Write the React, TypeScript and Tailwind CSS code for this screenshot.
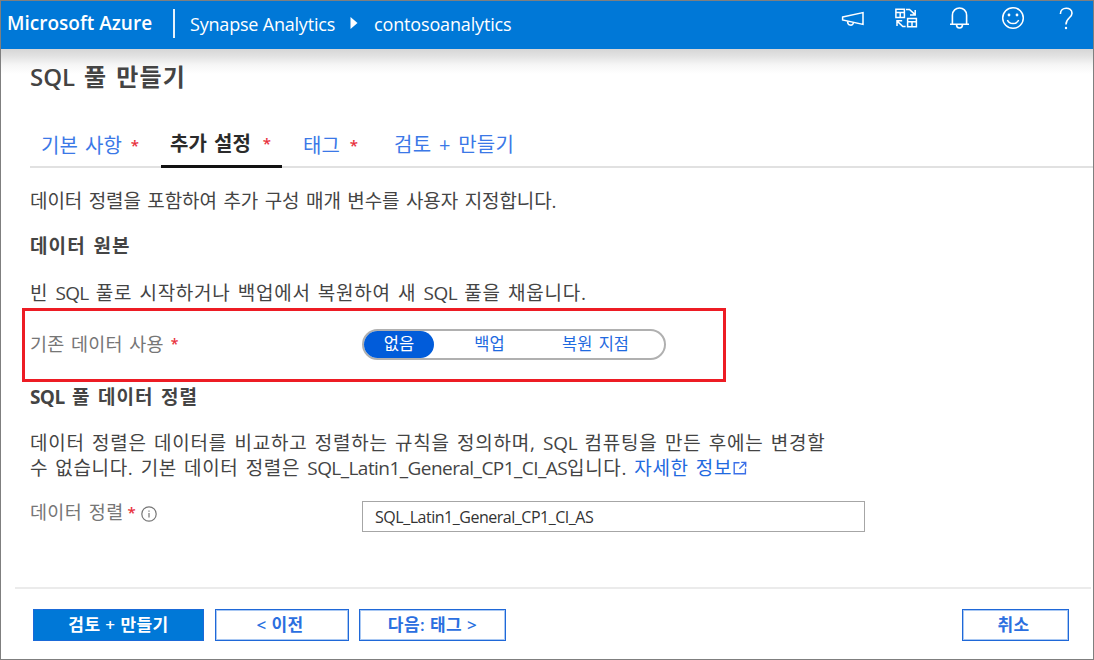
import React from "react";

function MegaphoneIcon() {
  return (
    <svg width="24" height="24" viewBox="0 0 24 24" fill="none" stroke="#fff" strokeWidth="1.5">
      <path d="M2.6 11 L23 6.6 V18.4 L2.6 14 Z" />
      <path d="M7.6 15.2 C7.6 20.2 13.2 20.2 13.4 16.5" />
    </svg>
  );
}

function DirectoryIcon() {
  return (
    <svg width="24" height="24" viewBox="0 0 24 24" fill="none" stroke="#fff" strokeWidth="1.5">
      <path d="M1.9 3.2 H10.4 V11.4 H1.9 Z M1.9 6.4 H10.4 M6.2 6.4 V11.4" />
      <path d="M13.6 12.6 H22.4 V20.8 H13.6 Z M13.6 15.8 H22.4 M18 15.8 V20.8" />
      <path d="M12 3.4 H15.5 L20.8 8.4 M21.2 4 V9 H16" />
      <path d="M11.6 20.6 H8.8 L3.4 15.4 M3 20 V14.8 H8.2" />
    </svg>
  );
}

function BellIcon() {
  return (
    <svg width="24" height="24" viewBox="0 0 24 24" fill="none" stroke="#fff" strokeWidth="1.6">
      <path d="M3 18.2 H22 M5.4 18 V9.2 C5.4 -0.4 19.6 -0.4 19.6 9.2 V18" />
      <path d="M9.5 18.6 C9.5 23.2 15.5 23.2 15.5 18.6" />
    </svg>
  );
}

function SmileyIcon() {
  return (
    <svg width="24" height="24" viewBox="0 0 24 24" fill="none" stroke="#fff" strokeWidth="1.5">
      <circle cx="12" cy="12" r="10.3" />
      <path d="M6.4 14 C8.2 18.8 15.8 18.8 17.6 14" />
      <circle cx="8" cy="9" r="1.4" fill="#fff" stroke="none" />
      <circle cx="16" cy="9" r="1.4" fill="#fff" stroke="none" />
    </svg>
  );
}

function HelpIcon() {
  return (
    <svg width="24" height="24" viewBox="0 0 24 24" fill="none" stroke="#fff" strokeWidth="1.6">
      <path d="M6.4 8 C6.4 0.2 18 0.6 18 7.2 C18 11.8 12 12 12 18.4" />
      <circle cx="12" cy="22" r="1.2" fill="#fff" stroke="none" />
    </svg>
  );
}

function InfoIcon() {
  return (
    <svg className="ml-[5px] mt-[3px]" width="16" height="16" viewBox="0 0 16 16" fill="none" stroke="#767676" strokeWidth="1.2">
      <circle cx="8" cy="8" r="7.2" />
      <path d="M8 7 V11.6" />
      <path d="M8 4.4 V5.7" />
    </svg>
  );
}

function ExternalIcon() {
  return (
    <svg className="ml-[1px] inline-block align-[0px]" width="14" height="14" viewBox="0 0 14 14" fill="none" stroke="#3b6fe8" strokeWidth="1.4">
      <path d="M6.5 1.7 H1.2 V12.8 H12.4 V7.5" />
      <path d="M8.2 1.4 H12.7 V5.8 M12.6 1.5 L6.4 7.7" />
    </svg>
  );
}

function Star({ className = "" }: { className?: string }) {
  return <span className={"font-semibold text-[#e8303c] " + className}>*</span>;
}

export default function App() {
  return (
    <div className="flex h-[660px] w-[1094px] flex-col overflow-hidden border border-[#7f7f7f] bg-white font-['Open_Sans','Noto_Sans_CJK_KR',sans-serif] text-[#444]">
      <header className="flex h-12 shrink-0 items-center bg-[#0078d7] text-white">
        <div className="w-[172px] whitespace-nowrap pb-[3px] pl-[6px] text-[19px] font-semibold">Microsoft Azure</div>
        <div className="mb-1 h-[29px] w-[2px] bg-white/90" />
        <div className="w-[161px] whitespace-nowrap pb-[2px] pl-[15px] text-[18px] tracking-[-0.2px]">Synapse Analytics</div>
        <svg className="mb-1 ml-[14px]" width="8" height="12" viewBox="0 0 8 12">
          <path d="M0.5 0 L7.5 6 L0.5 12 Z" fill="#fff" />
        </svg>
        <div className="ml-4 whitespace-nowrap pb-[2px] text-[18px] tracking-[-0.15px]">contosoanalytics</div>
        <div className="mb-[14px] ml-auto mr-[15px] flex gap-[29.5px]">
          <MegaphoneIcon />
          <DirectoryIcon />
          <BellIcon />
          <SmileyIcon />
          <HelpIcon />
        </div>
      </header>

      <main className="flex flex-1 flex-col bg-[linear-gradient(to_bottom,#d6d6d6_0px,#e2e2e2_7px,#f6f6f6_16px,#ffffff_25px)] pl-[29px]">
        <h1 className="h-[56px] whitespace-nowrap text-[24px] font-semibold leading-[56px] tracking-[1.2px] [word-spacing:1.5px]"><span className="tracking-[0px]">SQL</span> 풀 만들기</h1>

        <nav className="mt-[16px] flex h-[47px] shrink-0 whitespace-nowrap border-b-2 border-[#e1e1e1] text-[20px] leading-[48px] text-[#3b78e7] [word-spacing:2px]">
          <div className="w-[131px] pl-[11px]">기본 사항<Star className="ml-[9px] align-[2px] text-[15px]" /></div>
          <div className="h-[47px] w-[121px] border-b-3 border-[#111] pl-[9px] font-semibold leading-[44px] text-[#2b2b2b]">추가 설정<Star className="ml-3 align-[2px] text-[15px]" /></div>
          <div className="w-[112px] pl-[21px]">태그<Star className="ml-[10px] align-[2px] text-[15px]" /></div>
          <div className="tracking-[0.3px]">검토 + 만들기</div>
        </nav>

        <p className="mt-[18px] h-[30px] whitespace-nowrap text-[19px] leading-[30px] tracking-[-0.1px] [word-spacing:1.7px]">데이터 정렬을 포함하여 추가 구성 매개 변수를 사용자 지정합니다.</p>
        <h2 className="mt-[15px] h-[30px] whitespace-nowrap text-[19px] font-bold leading-[30px] tracking-[1.1px] [word-spacing:1.6px]">데이터 원본</h2>
        <p className="mt-[17px] h-[30px] whitespace-nowrap text-[19px] leading-[30px] tracking-[0.73px] [word-spacing:1.6px]">
          빈 <span className="tracking-[-0.7px]">SQL</span> 풀로 시작하거나 백업에서 복원하여 새 <span className="tracking-[-0.5px]">SQL</span> 풀을 채웁니다.
        </p>

        <section className="-ml-2 flex h-[74px] w-[704px] shrink-0 items-center border-3 border-[#ed1c24] pb-[2px] pl-[5px]">
          <div className="w-[332px] whitespace-nowrap text-[18.5px] tracking-[0.2px] text-[#767676] [word-spacing:1.6px]">기존 데이터 사용<Star className="ml-[7px] align-[2px] text-[14px]" /></div>
          <div className="flex h-[31px] w-[304px] items-center whitespace-nowrap rounded-full border-2 border-[#b0b0b0] text-[16.5px] text-[#1f6ae0]">
            <div className="flex h-[27px] w-[70px] items-center justify-center rounded-full bg-[#015cda] text-white">없음</div>
            <div className="w-[111px] text-center">백업</div>
            <div className="w-[101px] text-center [word-spacing:2px]">복원 지점</div>
          </div>
        </section>

        <h2 className="h-[30px] whitespace-nowrap text-[19px] font-bold leading-[30px] tracking-[1px] [word-spacing:1.6px]"><span className="tracking-[-0.6px]">SQL</span> 풀 데이터 정렬</h2>
        <p className="mt-[19px] h-[50px] whitespace-nowrap text-[19px] leading-[25px] tracking-[0.65px] [word-spacing:1.6px]">
          <span className="tracking-[0.77px]">데이터 정렬은 데이터를 비교하고 정렬하는 규칙을 정의하며, <span className="tracking-[-0.3px]">SQL</span> 컴퓨팅을 만든 후에는 변경할</span>
          <br />
          수 없습니다. 기본 데이터 정렬은 <span className="tracking-[-0.55px]">SQL_Latin1_General_CP1_CI_AS</span>입니다. <a className="text-[#1f6ae0]">자세한 정보<ExternalIcon /></a>
        </p>

        <div className="mt-[20px] flex h-[31px] shrink-0">
          <label className="flex h-[22px] w-[332px] items-center whitespace-nowrap text-[18.5px] tracking-[0.35px] text-[#767676] [word-spacing:1.6px]">
            데이터 정렬<Star className="ml-1 text-[15px]" /><InfoIcon />
          </label>
          <div className="flex h-[31px] w-[503px] items-center whitespace-nowrap border border-[#a6a6a6] bg-white pl-3 text-[16px] tracking-[-0.48px] text-[#333]">SQL_Latin1_General_CP1_CI_AS</div>
        </div>
      </main>

      <footer className="ml-[14px] mr-[2px] flex h-[72px] shrink-0 items-start border-t-2 border-[#ebebeb] pl-[18px] pt-[20px] text-[17px] font-semibold tracking-[0.45px] text-[#2b6fe0] [word-spacing:2.8px]">
        <button className="h-[32px] w-[171px] whitespace-nowrap border border-[#1a6ad8] bg-[#0078d7] text-white">검토 + 만들기</button>
        <button className="ml-[11px] h-[32px] w-[134px] whitespace-nowrap border border-[#1f68d8] pr-1 ring-1 ring-inset ring-[#a9c8f3]">&lt; 이전</button>
        <button className="ml-[10px] h-[32px] w-[147px] whitespace-nowrap border border-[#1f68d8] ring-1 ring-inset ring-[#a9c8f3]">다음: 태그 &gt;</button>
        <button className="ml-auto mr-[22px] h-[32px] w-[107px] whitespace-nowrap border border-[#1f68d8] pr-1 ring-1 ring-inset ring-[#a9c8f3]">취소</button>
      </footer>
    </div>
  );
}
